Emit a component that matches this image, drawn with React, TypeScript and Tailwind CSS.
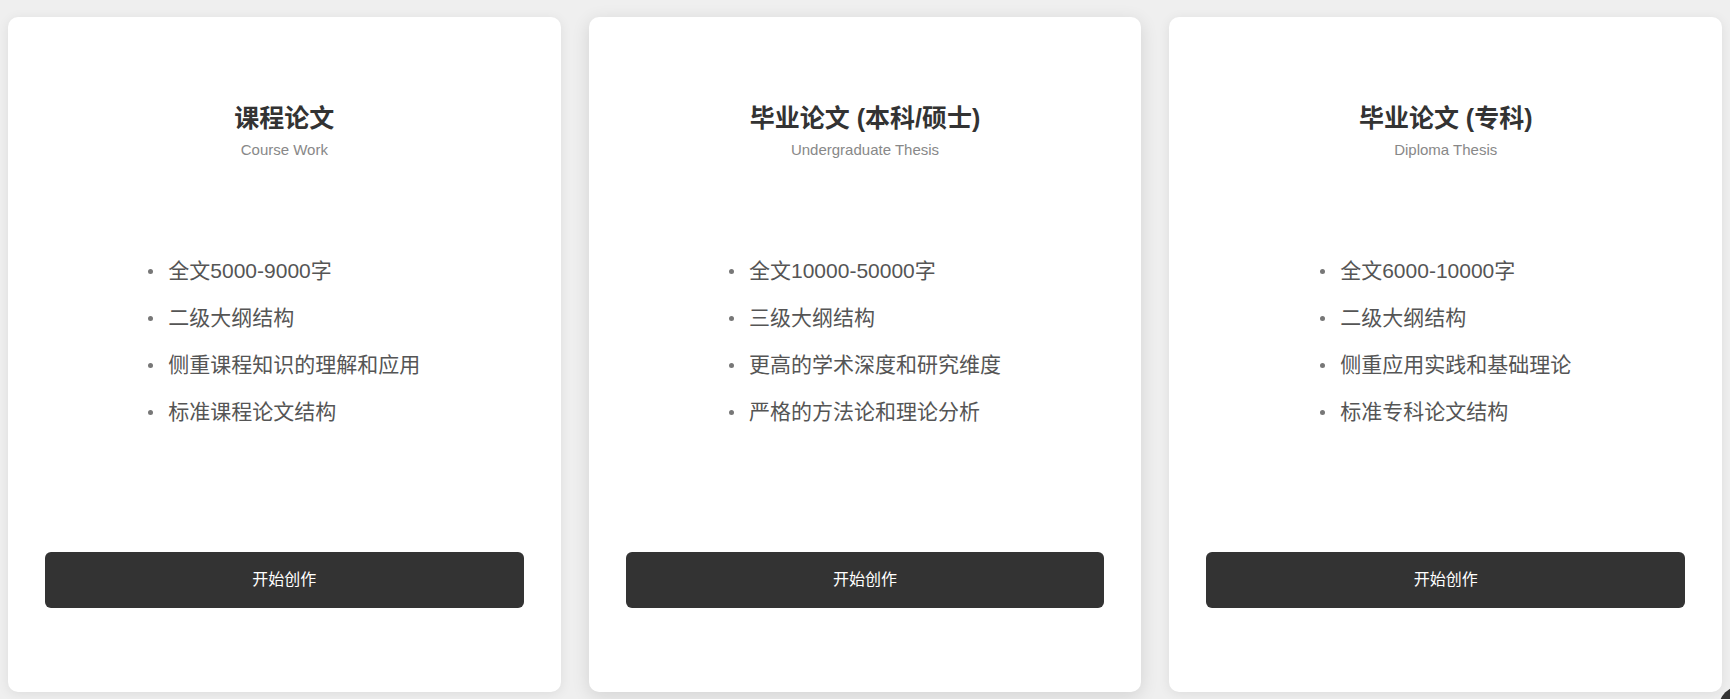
import React from 'react';

type Paper = {
    title: string;
    subtitle: string;
    points: string[];
};

const papers: Paper[] = [
    {
        title: '课程论文',
        subtitle: 'Course Work',
        points: ['全文5000-9000字', '二级大纲结构', '侧重课程知识的理解和应用', '标准课程论文结构'],
    },
    {
        title: '毕业论文 (本科/硕士)',
        subtitle: 'Undergraduate Thesis',
        points: ['全文10000-50000字', '三级大纲结构', '更高的学术深度和研究维度', '严格的方法论和理论分析'],
    },
    {
        title: '毕业论文 (专科)',
        subtitle: 'Diploma Thesis',
        points: ['全文6000-10000字', '二级大纲结构', '侧重应用实践和基础理论', '标准专科论文结构'],
    },
];

function PaperCard({ paper, raised }: { paper: Paper; raised?: boolean }) {
    return (
        <div
            className={
                raised
                    ? 'flex-1 h-[675px] bg-white rounded-[10px] flex flex-col px-[37px] pt-[86px] pb-[84px] shadow-[0_4px_18px_rgba(0,0,0,0.12)]'
                    : 'flex-1 h-[675px] bg-white rounded-[10px] flex flex-col px-[37px] pt-[86px] pb-[84px] shadow-[0_2px_12px_rgba(0,0,0,0.08)]'
            }
        >
            <div className="text-center">
                <h2 className="text-[25px] leading-[30px] font-bold text-[#333]">{paper.title}</h2>
                <p className="mt-[7px] text-[15px] leading-[20px] text-[#888]">{paper.subtitle}</p>
            </div>

            <div className="mt-[96px] flex justify-center">
                <ul className="flex flex-col gap-[17px]">
                    {paper.points.map((point) => (
                        <li key={point} className="flex items-center text-[21px] leading-[30px] text-[#555]">
                            <span className="w-[5px] h-[5px] rounded-full bg-[#777] mr-[15px]" />
                            {point}
                        </li>
                    ))}
                </ul>
            </div>

            <button className="mt-auto h-[56px] w-full rounded-[6px] bg-[#333] text-white text-[16px]">
                开始创作
            </button>
        </div>
    );
}

export default function App() {
    return (
        <div
            className="relative min-h-[699px] bg-[#efefef] px-[8px] pt-[17px] overflow-hidden"
            style={{ fontFamily: '"Liberation Sans", Arial, "Noto Sans CJK SC", sans-serif' }}
        >
            <div className="flex gap-[28px]">
                {papers.map((paper, i) => (
                    <PaperCard key={paper.subtitle} paper={paper} raised={i === 1} />
                ))}
            </div>
            <div className="fixed w-[50px] h-[50px] rounded-full bg-[#333] right-[-38px] bottom-[-36px]" />
        </div>
    );
}
